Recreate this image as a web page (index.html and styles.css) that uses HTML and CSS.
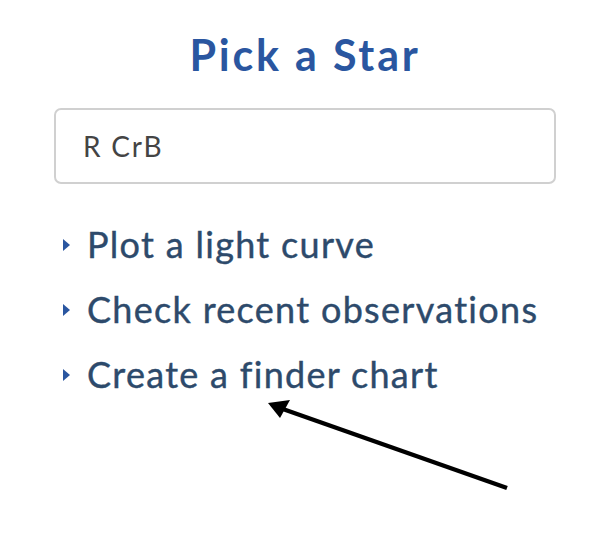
FILE: index.html
```html
<!DOCTYPE html>
<html>
<head>
<meta charset="utf-8">
<link rel="stylesheet" href="styles.css">
</head>
<body>
<main class="panel">
  <h1 class="title">Pick a Star</h1>
  <div class="field">R CrB</div>
  <ul class="actions">
    <li class="action"><span class="caret"></span>Plot a light curve</li>
    <li class="action"><span class="caret"></span>Check recent observations</li>
    <li class="action"><span class="caret"></span>Create a finder chart</li>
  </ul>
  <svg class="pointer" width="604" height="557" viewBox="0 0 604 557">
    <line x1="507" y1="488" x2="280" y2="408" stroke="#000" stroke-width="4.5"/>
    <polygon points="268,403 290,400 280,418" fill="#000"/>
  </svg>
</main>
</body>
</html>
```
FILE: styles.css
```css
html, body {
  margin: 0;
  padding: 0;
  background: #fff;
}
.panel {
  position: relative;
  width: 604px;
  height: 557px;
  box-sizing: border-box;
  padding: 29px 48px 0 54px;
  font-family: Lato, "Open Sans", sans-serif;
}
.title {
  margin: 0;
  text-align: center;
  font-size: 43px;
  line-height: 52px;
  font-weight: 700;
  color: #2a56a0;
  letter-spacing: 2.8px;
}
.field {
  margin-top: 27px;
  height: 76px;
  box-sizing: border-box;
  border: 2px solid #d0d0d0;
  border-radius: 7px;
  padding: 0 0 0 27px;
  display: flex;
  align-items: center;
  font-size: 28px;
  letter-spacing: 1.8px;
  color: #444;
}
.actions {
  list-style: none;
  margin: 39px 0 0 0;
  padding: 0;
  display: flex;
  flex-direction: column;
  gap: 22px;
}
.action {
  display: flex;
  align-items: center;
  font-size: 36px;
  line-height: 43px;
  letter-spacing: 1.3px;
  color: #2d4a6b;
  -webkit-text-stroke: 0.4px #2d4a6b;
}
.caret {
  width: 0;
  height: 0;
  margin: 0 17px 0 9px;
  border-top: 6px solid transparent;
  border-bottom: 6px solid transparent;
  border-left: 7px solid #2a56a0;
}
.pointer {
  position: absolute;
  left: 0;
  top: 0;
  pointer-events: none;
}
```
